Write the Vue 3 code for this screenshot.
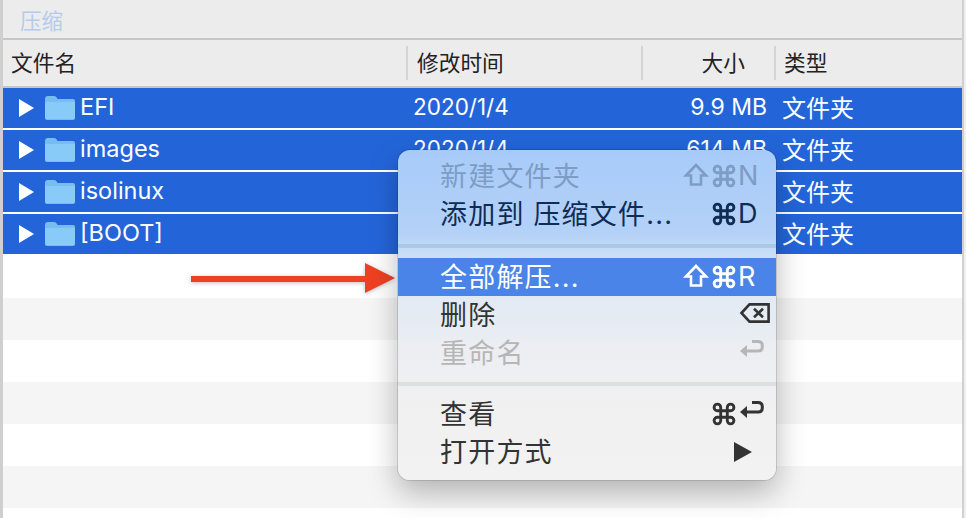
<script setup>
const columns = [
  { label: '文件名', cls: 'c-name' },
  { label: '修改时间', cls: 'c-date' },
  { label: '大小', cls: 'c-size' },
  { label: '类型', cls: 'c-kind' }
]

const files = [
  { name: 'EFI', date: '2020/1/4', size: '9.9 MB' },
  { name: 'images', date: '2020/1/4', size: '614 MB' },
  { name: 'isolinux', date: '2020/1/4', size: '1.2 MB' },
  { name: '[BOOT]', date: '2020/1/4', size: '4 KB' }
]

// 空行の縞模様
const stripes = [false, true, false, true, false, true, false]

const menu = [
  { label: '新建文件夹', tone: 'off-blue', shift: true, cmd: true, key: 'N' },
  { label: '添加到 压缩文件...', tone: 'on-blue', cmd: true, key: 'D' },
  { sep: true, cls: 'sep-a' },
  { label: '全部解压...', tone: 'active', shift: true, cmd: true, key: 'R' },
  { label: '删除', tone: 'plain', icon: 'delete' },
  { label: '重命名', tone: 'off', icon: 'return' },
  { sep: true, cls: 'sep-b' },
  { label: '查看', tone: 'plain', cmd: true, icon: 'return' },
  { label: '打开方式', tone: 'plain', icon: 'more' }
]
</script>

<template>
  <div class="page">
    <div class="toolbar"><span class="compress">压缩</span></div>

    <div class="head">
      <div v-for="col in columns" :key="col.label" class="col" :class="col.cls">{{ col.label }}</div>
    </div>

    <div class="list">
      <div v-for="file in files" :key="file.name" class="row">
        <div class="c-name cell name-cell">
          <svg class="twist" viewBox="0 0 15 18"><path d="M0 0 L15 9 L0 18 Z" fill="#fff" /></svg>
          <svg class="folder" viewBox="0 0 30 24">
            <path d="M0 3 Q0 0 3 0 H9 Q11 0 12 2 L12.6 3 H28 Q30 3 30 5 V22 Q30 24 28 24 H2 Q0 24 0 22 Z" fill="#78bdee" />
            <path d="M0 6 H30 V21.6 Q30 23 28.5 23 H1.5 Q0 23 0 21.6 Z" fill="#88cbf8" />
          </svg>
          <span class="fname">{{ file.name }}</span>
        </div>
        <div class="c-date cell latin">{{ file.date }}</div>
        <div class="c-size cell latin">{{ file.size }}</div>
        <div class="c-kind cell cjk">文件夹</div>
      </div>
      <div v-for="(grey, i) in stripes" :key="i" class="blank" :class="{ grey }"></div>
    </div>

    <svg class="arrow" viewBox="0 0 205 30">
      <path d="M0 13 H174 V0 L204 15 L174 30 V19 H0 Z" fill="#ee4023" />
    </svg>

    <div class="menu">
      <template v-for="(item, i) in menu" :key="i">
        <div v-if="item.sep" class="sep" :class="item.cls"></div>
        <div v-else class="item" :class="item.tone">
          <span class="label">{{ item.label }}</span>
          <span class="keys">
            <svg v-if="item.shift" class="k-shift" viewBox="0 0 24 24">
              <path d="M12 2 L22 12.5 H17 V21.5 H7 V12.5 H2 Z" />
            </svg>
            <svg v-if="item.cmd" class="k-cmd" viewBox="2 2 20 20">
              <path d="M9 9h6v6H9z M9 9V6a3 3 0 1 0-3 3h3 M15 9h3a3 3 0 1 0-3-3v3 M15 15v3a3 3 0 1 0 3-3h-3 M9 15H6a3 3 0 1 0 3 3v-3" />
            </svg>
            <span v-if="item.key" class="k-letter">{{ item.key }}</span>
            <svg v-if="item.icon === 'delete'" class="k-delete" viewBox="0 0 30 20">
              <path d="M1.5 10 L9.5 1.4 H28.6 V18.6 H9.5 Z M14 5.8 L23 14.2 M23 5.8 L14 14.2" />
            </svg>
            <svg v-if="item.icon === 'return'" class="k-return" viewBox="0 0 24 18">
              <path d="M12 1.5 H18 Q22.3 1.5 22.3 5.5 V7 Q22.3 11 18 11 H5" />
              <path class="solid" d="M0 11 L7 5 V17 Z" />
            </svg>
            <svg v-if="item.icon === 'more'" class="k-more" viewBox="0 0 18 20">
              <path class="solid" d="M0 0 L18 10 L0 20 Z" />
            </svg>
          </span>
        </div>
      </template>
    </div>
  </div>
</template>

<style scoped>
.page {
  position: relative;
  width: 966px;
  height: 518px;
  overflow: hidden;
  box-sizing: border-box;
  padding: 0 4px 0 3px;
  background: #fff;
  font-family: Inter, "Noto Sans CJK SC", sans-serif;
  color: #222;
}
.page::before {
  content: "";
  position: absolute;
  left: 0;
  top: 0;
  bottom: 0;
  width: 3px;
  background: #cfcfcf;
}
.page::after {
  content: "";
  position: absolute;
  right: 0;
  top: 0;
  bottom: 0;
  width: 2px;
  border-left: 2px solid #d0d0d0;
  background: #efefef;
}

/* toolbar */
.toolbar {
  height: 38px;
  background: #ececec;
  border-bottom: 2px solid #c6c6c6;
  display: flex;
  align-items: center;
  padding-left: 17px;
}
.compress {
  font-size: 21.5px;
  color: #b5cbed;
}

/* header */
.head {
  height: 48px;
  box-sizing: border-box;
  background: #ececec;
  border-bottom: 2px solid #c6c6c6;
  display: flex;
  align-items: center;
  font-size: 21.7px;
  color: #222;
}
.col {
  height: 34px;
  margin-top: -1px;
  line-height: 34px;
  box-sizing: border-box;
}
.c-name { width: 403px; padding-left: 8px; }
.c-date { width: 235px; padding-left: 9px; }
.c-size { width: 133px; text-align: right; padding-right: 30px; }
.c-kind { flex: 1; padding-left: 8px; }
.col.c-date, .col.c-size, .col.c-kind { border-left: 2px solid #d4d4d4; }
.col.c-size { padding-right: 29px; }

/* rows */
.row {
  height: 40px;
  margin-bottom: 2px;
  background: #2365d9;
  color: #fff;
  display: flex;
  align-items: center;
  font-size: 23.5px;
}
.row:nth-child(4) { margin-bottom: 0; }
.cell { box-sizing: border-box; white-space: nowrap; }
.row .c-date { padding-left: 7px; font-size: 22.5px; }
.row .c-size { padding-right: 7px; font-size: 23px; }
.row .c-kind { padding-left: 8px; }
.latin { padding-bottom: 3px; }
.cjk { font-size: 24px; padding-bottom: 3px; }
.name-cell {
  display: flex;
  align-items: center;
  padding-left: 16px;
}
.twist { width: 15px; height: 18px; flex-shrink: 0; }
.folder { width: 30px; height: 24px; margin-left: 11px; flex-shrink: 0; }
.fname { margin-left: 5px; padding-bottom: 4px; }

.blank { height: 42px; }
.blank:nth-child(5) { height: 44px; }
.blank.grey { background: #f5f5f5; }

/* arrow */
.arrow {
  position: absolute;
  left: 191px;
  top: 263px;
  width: 205px;
  height: 30px;
  filter: drop-shadow(0 1px 2px rgba(0, 0, 0, 0.25));
}

/* menu */
.menu {
  position: absolute;
  left: 398px;
  top: 150px;
  width: 378px;
  height: 330px;
  box-sizing: border-box;
  padding: 7px 0 9px;
  border-radius: 12px;
  background: linear-gradient(180deg, #a7cbf9 0, #b4d1f7 84px, #c9def7 104px, #e2eaf4 150px, #eceef2 200px, #f0f0f1 250px, #f2f2f2 330px);
  box-shadow: 0 0 0 1px rgba(0, 0, 0, 0.12), 0 12px 30px rgba(0, 0, 0, 0.28);
}
.item {
  height: 38px;
  display: flex;
  align-items: center;
  justify-content: space-between;
  padding: 0 18px 0 42px;
  font-size: 27px;
  line-height: 30px;
  letter-spacing: 1.2px;
  white-space: nowrap;
}
.label { padding-top: 1px; }
.sep { height: 4px; }
.sep-a { margin: 11px 0 10px; background: rgba(60, 90, 130, 0.14); }
.sep-b { margin: 10px 0 9px; background: rgba(0, 0, 0, 0.07); }

.on-blue { color: #0e2c54; }
.off-blue { color: #7d9dc4; }
.plain { color: #333; }
.off { color: #b6b6b6; }
.active { background: #4a84e8; color: #fff; }

.keys {
  display: flex;
  align-items: center;
  gap: 5px;
  letter-spacing: 0;
  font-size: 27px;
}
.keys svg {
  fill: none;
  stroke: currentColor;
  stroke-width: 2.6;
  display: block;
  overflow: visible;
}
.keys .solid { fill: currentColor; stroke: none; }
.k-shift { width: 24px; height: 24px; margin-top: -2px; }
.k-cmd { width: 22px; height: 22px; margin-top: -1px; }
.k-letter { width: 20px; margin-left: -2px; }
.k-delete { width: 30px; height: 20px; margin-right: -12px; margin-top: -4px; }
.keys .k-return { width: 24px; height: 18px; margin-right: -6px; margin-top: -8px; stroke-width: 3; }
.k-more { width: 18px; height: 20px; margin-right: 6px; }
</style>
